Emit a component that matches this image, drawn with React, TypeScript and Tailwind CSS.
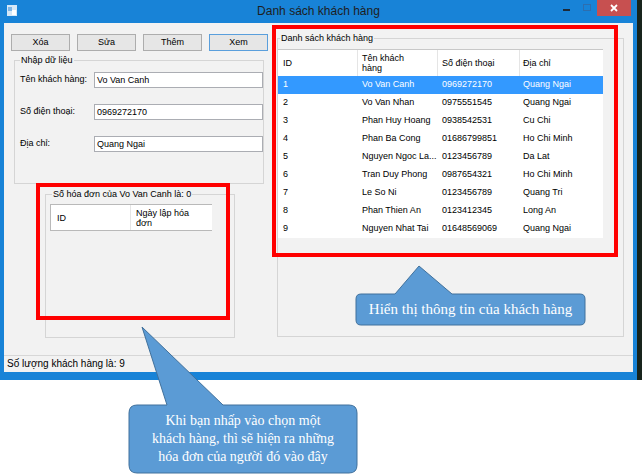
import React from "react";

const customers = [
  ["1", "Vo Van Canh", "0969272170", "Quang Ngai"],
  ["2", "Vo Van Nhan", "0975551545", "Quang Ngai"],
  ["3", "Phan Huy Hoang", "0938542531", "Cu Chi"],
  ["4", "Phan Ba Cong", "01686799851", "Ho Chi Minh"],
  ["5", "Nguyen Ngoc La...", "0123456789", "Da Lat"],
  ["6", "Tran Duy Phong", "0987654321", "Ho Chi Minh"],
  ["7", "Le So Ni", "0123456789", "Quang Tri"],
  ["8", "Phan Thien An", "0123412345", "Long An"],
  ["9", "Nguyen Nhat Tai", "01648569069", "Quang Ngai"],
];

const WinButton = ({ label, focused }: { label: string; focused?: boolean }) => (
  <div
    className={
      "w-[59px] h-[17px] flex items-center justify-center border text-[9px] bg-[#e6e6e6] " +
      (focused ? "border-[#5a9fdc]" : "border-[#adadad]")
    }
  >
    {label}
  </div>
);

const Field = ({ label, value }: { label: string; value: string }) => (
  <div className="flex items-center h-[16px]">
    <div className="w-[74px] text-[9px]">{label}</div>
    <div className="w-[169px] h-[16px] bg-white border border-[#abadb3] pl-[2px] text-[9px] leading-[14px]">
      {value}
    </div>
  </div>
);

const TitleBar = () => (
  <div className="h-[23px] grid grid-cols-[1fr_auto_1fr] items-start">
    <div className="pl-[7px] pt-[5px]">
      <svg width="10" height="11" viewBox="0 0 10 11">
        <rect x="0" y="0" width="10" height="11" fill="#d6e8f7" />
        <rect x="1" y="2" width="4" height="4" fill="#7fb6e6" />
        <rect x="5" y="5" width="4" height="5" fill="#ffffff" />
      </svg>
    </div>
    <div className="pt-[4px] text-[12px] leading-[15px] text-[#1e1e1e]">Danh sách khách hàng</div>
    <div className="flex justify-end items-start pr-[6px]">
      <div className="w-[22px] h-[16px] flex items-start justify-center pt-[9px]">
        <div className="w-[7px] h-[2px] bg-[#1d2a38]" />
      </div>
      <div className="w-[20px] h-[16px] flex items-start justify-center pt-[4px]">
        <div className="w-[8px] h-[7px] border border-[#2d6eae]" />
      </div>
      <div className="w-[34px] h-[16px] bg-[#c75050] flex items-center justify-center">
        <svg width="8" height="8" viewBox="0 0 8 8">
          <path d="M1 1 L7 7 M7 1 L1 7" stroke="#ffffff" strokeWidth="1.8" />
        </svg>
      </div>
    </div>
  </div>
);

export default function App() {
  return (
    <div className="relative w-[642px] h-[476px] overflow-hidden bg-white font-['Liberation_Sans',Arial,sans-serif] text-black">
      <div className="flex">
        <div className="w-[637px] h-[380px] bg-[#1883d7] flex flex-col">
          <TitleBar />
          <div className="ml-[4px] w-[629px] h-[349px] bg-[#f2f2f2] flex flex-col">
            <div className="flex h-[332px]">
              {/* left side */}
              <div className="w-[269px] flex flex-col">
                <div className="mt-[11px] ml-[7px] flex gap-[7px]">
                  <WinButton label="Xóa" />
                  <WinButton label="Sửa" />
                  <WinButton label="Thêm" />
                  <WinButton label="Xem" focused />
                </div>

                <fieldset className="mt-[3px] ml-[10px] w-[250px] h-[130px] border border-[#d5d5d5] pl-[5px]">
                  <legend className="px-[1px] text-[9px] leading-[12px]">Nhập dữ liệu</legend>
                  <div className="mt-[6px] flex flex-col gap-[16px]">
                    <Field label="Tên khách hàng:" value="Vo Van Canh" />
                    <Field label="Số điện thoại:" value="0969272170" />
                    <Field label="Địa chỉ:" value="Quang Ngai" />
                  </div>
                </fieldset>

                <fieldset className="mt-[4px] ml-[41px] w-[190px] h-[150px] border border-[#d5d5d5]">
                  <legend className="ml-[6px] px-[1px] text-[9px] leading-[12px]">
                    Số hóa đơn của Vo Van Canh là: 0
                  </legend>
                  <div className="mt-[4px] ml-[4px] w-[162px] h-[27px] flex bg-white border-t border-l border-b border-[#b9b9b9] text-[9px] leading-[10px]">
                    <div className="w-[80px] pl-[6px] flex items-center border-r border-[#e5e5e5]">ID</div>
                    <div className="flex-1 pl-[5px] flex items-center">
                      Ngày lập hóa
                      <br />
                      đơn
                    </div>
                  </div>
                </fieldset>
              </div>

              {/* right side */}
              <fieldset className="mt-[9px] ml-[4px] w-[347px] h-[305px] border border-[#d5d5d5]">
                <legend className="ml-[2px] px-[1px] text-[9px] leading-[12px]">Danh sách khách hàng</legend>
                <div className="mt-[5px] w-[325px] bg-white text-[9px]">
                  <div className="h-[27px] flex border-t border-[#c8c8c8] leading-[10px]">
                    <div className="w-[80px] pl-[5px] flex items-center border-r border-[#e5e5e5]">ID</div>
                    <div className="w-[80px] pl-[4px] flex items-center border-r border-[#e5e5e5]">
                      Tên khách
                      <br />
                      hàng
                    </div>
                    <div className="w-[82px] pl-[4px] flex items-center border-r border-[#e5e5e5]">Số điện thoại</div>
                    <div className="w-[82px] pl-[3px] flex items-center">Địa chỉ</div>
                  </div>
                  {customers.map((r, i) => (
                    <div
                      key={r[0]}
                      className={"h-[18px] flex items-center " + (i === 0 ? "bg-[#3399ff] text-white" : "")}
                    >
                      <div className="w-[80px] pl-[5px]">{r[0]}</div>
                      <div className="w-[80px] pl-[4px] whitespace-nowrap">{r[1]}</div>
                      <div className="w-[82px] pl-[4px]">{r[2]}</div>
                      <div className="w-[82px] pl-[3px]">{r[3]}</div>
                    </div>
                  ))}
                </div>
              </fieldset>
            </div>
            <div className="h-[17px] border-t border-[#d7d7d7] pl-[3px] text-[10px] leading-[16px]">
              Số lượng khách hàng là: 9
            </div>
          </div>
        </div>
        <div className="w-[5px] h-[380px] bg-[#18241c]" />
      </div>

      {/* annotation frames */}
      <div className="absolute left-[36px] top-[183px] w-[194px] h-[137px] border-4 border-[#ff0000]" />
      <div className="absolute left-[272px] top-[25px] w-[346px] h-[232px] border-4 border-[#ff0000]" />

      {/* callouts */}
      <svg className="absolute left-0 top-0 pointer-events-none" width="642" height="476" viewBox="0 0 642 476">
        <path
          d="M361 294 L395 294 L419 266 L452 294 L580 294 Q585 294 585 299 L585 320 Q585 325 580 325 L361 325 Q356 325 356 320 L356 299 Q356 294 361 294 Z"
          fill="#5b9bd5"
          stroke="#41719c"
          strokeWidth="1"
        />
        <path
          d="M137 405 L167 405 L142 327 L223 405 L349 405 Q357 405 357 413 L357 465 Q357 473 349 473 L137 473 Q129 473 129 465 L129 413 Q129 405 137 405 Z"
          fill="#5b9bd5"
          stroke="#41719c"
          strokeWidth="1"
        />
      </svg>
      <div className="absolute left-[356px] top-[294px] w-[229px] h-[31px] flex items-center justify-center text-white text-[15px] font-['Liberation_Serif','Times_New_Roman',serif]">
        Hiển thị thông tin của khách hàng
      </div>
      <div className="absolute left-[129px] top-[405px] w-[228px] h-[68px] flex flex-col items-center justify-center text-white text-[14px] leading-[18px] font-['Liberation_Serif','Times_New_Roman',serif]">
        <div>Khi bạn nhấp vào chọn một</div>
        <div>khách hàng, thì sẽ hiện ra những</div>
        <div>hóa đơn của người đó vào đây</div>
      </div>
    </div>
  );
}
